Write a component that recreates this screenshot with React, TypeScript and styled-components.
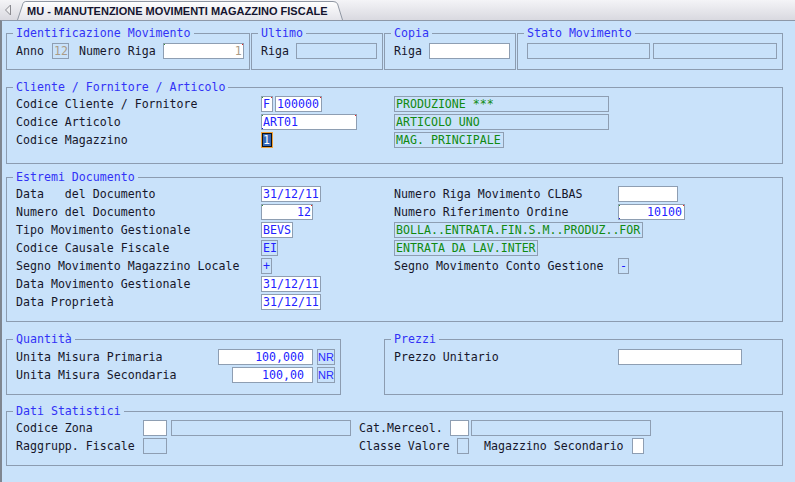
import React from "react";
import styled, { createGlobalStyle } from "styled-components";

const GlobalStyle = createGlobalStyle`
  html, body { margin: 0; padding: 0; }
  body {
    background: #c9e2fa;
    font-family: "DejaVu Sans Mono", "Liberation Mono", monospace;
    font-size: 11.6px;
    color: #16162a;
  }
`;

const Screen = styled.div`
  width: 795px;
  height: 482px;
  display: flex;
  flex-direction: column;
  overflow: hidden;
`;

const TabBar = styled.div`
  height: 20px;
  flex: none;
  display: flex;
  align-items: flex-end;
  background: linear-gradient(#f4f4f7, #d9d9e0);
`;

const BackArrow = styled.svg`
  width: 8px;
  height: 12px;
  margin: 0 0 4px 4px;
  flex: none;
`;

const Tab = styled.div`
  position: relative;
  width: 326px;
  height: 19px;
  margin-left: 5px;
  flex: none;
  display: flex;
  align-items: center;
  box-sizing: border-box;
  padding-left: 10px;
  font: bold 11px "Liberation Sans", Arial, sans-serif;
  color: #14142e;
  > svg {
    position: absolute;
    inset: 0;
  }
  > span {
    position: relative;
  }
`;

const Panel = styled.div`
  flex: 1;
  border-top: 1px solid #8d98a8;
  border-left: 2px solid #7f8690;
  padding: 6px 0 0 4px;
  display: flex;
  flex-direction: column;
`;

const GroupRow = styled.div<{ $mt?: number; $gap?: number }>`
  display: flex;
  gap: ${(p) => p.$gap ?? 1}px;
  margin-top: ${(p) => p.$mt ?? 0}px;
`;

const Group = styled.fieldset<{ $w: number; $pt?: number; $pb?: number; $pr?: number; $mt?: number }>`
  box-sizing: border-box;
  width: ${(p) => p.$w}px;
  min-width: 0;
  margin: ${(p) => p.$mt ?? 0}px 0 0;
  border: 1px solid #8c9cb0;
  padding: ${(p) => p.$pt ?? 1}px ${(p) => p.$pr ?? 6}px ${(p) => p.$pb ?? 10}px 9px;
`;

const Legend = styled.legend`
  padding: 0 3px;
  margin-left: -3px;
  line-height: 13px;
  color: #3232f6;
`;

const Columns = styled.div`
  display: flex;
`;

const Col = styled.div<{ $w?: number }>`
  display: flex;
  flex-direction: column;
  width: ${(p) => (p.$w ? `${p.$w}px` : "auto")};
  flex: ${(p) => (p.$w ? "none" : "1")};
`;

const Row = styled.div`
  height: 18px;
  display: flex;
  align-items: center;
`;

const Label = styled.span<{ $w?: number; $ml?: number; $grow?: boolean }>`
  flex: ${(p) => (p.$grow ? "1" : "none")};
  width: ${(p) => (p.$w ? `${p.$w}px` : "auto")};
  margin-left: ${(p) => p.$ml ?? 0}px;
  white-space: pre;
`;

type Tone = "blue" | "green" | "tan";

const toneColor: Record<Tone, string> = {
  blue: "#2222ff",
  green: "#108a10",
  tan: "#ab9c86",
};

const Field = styled.div<{
  $w: number;
  $edit?: boolean;
  $tone?: Tone;
  $right?: boolean;
  $ml?: number;
  $pr?: number;
}>`
  position: relative;
  box-sizing: border-box;
  flex: none;
  width: ${(p) => p.$w}px;
  height: 16px;
  margin-left: ${(p) => p.$ml ?? 0}px;
  border: 1px solid #8e9eb2;
  background: ${(p) => (p.$edit ? "#ffffff" : "transparent")};
  color: ${(p) => toneColor[p.$tone ?? "blue"]};
  line-height: 14px;
  padding: 0 ${(p) => p.$pr ?? 1}px 0 1px;
  text-align: ${(p) => (p.$right ? "right" : "left")};
  white-space: pre;
  overflow: hidden;
`;

const Mark = styled.i<{ $at: "g" | "r" | "b" }>`
  position: absolute;
  width: 2px;
  height: 2px;
  background: ${(p) => (p.$at === "g" ? "#2f8f3a" : p.$at === "r" ? "#e82020" : "#1414e0")};
  ${(p) =>
    p.$at === "g"
      ? "top: -1px; left: -1px;"
      : p.$at === "r"
      ? "top: -1px; right: -1px;"
      : "bottom: -1px; left: -1px;"}
`;

const Picked = styled.div`
  box-sizing: border-box;
  width: 12px;
  height: 16px;
  border: 1px solid #f0a23a;
  box-shadow: inset 0 0 0 1px #111;
  padding: 1px;
  line-height: 12px;
  > span {
    display: block;
    height: 12px;
    background: #3467b8;
    color: #fff;
  }
`;

const Unit = styled.div`
  box-sizing: border-box;
  width: 18px;
  height: 16px;
  margin-left: 4px;
  border: 1px solid #8e9eb2;
  font: 11px/14px "Liberation Sans", Arial, sans-serif;
  color: #2a2aff;
  text-align: center;
`;

const StatGrid = styled.div`
  display: grid;
  grid-template-columns: 127px 216px 91px 1fr;
  grid-auto-rows: 18px;
  align-items: center;
  > div {
    display: flex;
    align-items: center;
  }
`;

type BoxProps = React.ComponentProps<typeof Field> & { marks?: string };

const Box: React.FC<BoxProps> = ({ marks = "", children, ...rest }) => (
  <Field {...rest}>
    {children}
    {marks.split("").map((m) => (
      <Mark key={m} $at={m as "g" | "r" | "b"} />
    ))}
  </Field>
);

const App: React.FC = () => {
  return (
    <Screen>
      <GlobalStyle />
      <TabBar>
        <BackArrow viewBox="0 0 8 12">
          <polygon points="6.5,1 1.5,6 6.5,11" fill="#f0f0f2" stroke="#8a8a90" strokeWidth="1" />
        </BackArrow>
        <Tab>
          <svg viewBox="0 0 326 19" preserveAspectRatio="none" width="326" height="19">
            <defs>
              <linearGradient id="tabfill" x1="0" y1="0" x2="0" y2="1">
                <stop offset="0" stopColor="#ffffff" />
                <stop offset="1" stopColor="#e4e4ea" />
              </linearGradient>
            </defs>
            <path
              d="M0.5 19 L6 2.5 Q6.8 0.5 8.8 0.5 L316 0.5 Q319.6 0.5 320.6 3 L325.5 19"
              fill="url(#tabfill)"
              stroke="#8f96a2"
            />
          </svg>
          <span>MU - MANUTENZIONE MOVIMENTI MAGAZZINO FISCALE</span>
        </Tab>
      </TabBar>

      <Panel>
        <GroupRow>
          <Group $w={244} $pt={2} $pb={9}>
            <Legend>Identificazione Movimento</Legend>
            <Row>
              <Label>Anno</Label>
              <Box $w={17} $ml={8} $tone="tan" $right>12</Box>
              <Label $ml={10}>Numero Riga</Label>
              <Box $w={81} $ml={7} $edit $tone="tan" $right marks="gr">1</Box>
            </Row>
          </Group>
          <Group $w={132} $pt={2} $pb={9}>
            <Legend>Ultimo</Legend>
            <Row>
              <Label>Riga</Label>
              <Box $w={81} $ml={7} />
            </Row>
          </Group>
          <Group $w={132} $pt={2} $pb={9}>
            <Legend>Copia</Legend>
            <Row>
              <Label>Riga</Label>
              <Box $w={81} $ml={7} $edit />
            </Row>
          </Group>
          <Group $w={266} $pt={2} $pb={9}>
            <Legend>Stato Movimento</Legend>
            <Row>
              <Box $w={123} />
              <Box $w={124} $ml={3} />
            </Row>
          </Group>
        </GroupRow>

        <Group $w={777} $mt={11} $pt={1} $pb={14}>
          <Legend>Cliente / Fornitore / Articolo</Legend>
          <Columns>
            <Col $w={378}>
              <Row>
                <Label $w={245}>Codice Cliente / Fornitore</Label>
                <Box $w={12} $edit marks="gr">F</Box>
                <Box $w={47} $ml={2} $edit marks="r">100000</Box>
              </Row>
              <Row>
                <Label $w={245}>Codice Articolo</Label>
                <Box $w={96} $edit marks="grb">ART01</Box>
              </Row>
              <Row>
                <Label $w={245}>Codice Magazzino</Label>
                <Picked>
                  <span>1</span>
                </Picked>
              </Row>
            </Col>
            <Col>
              <Row>
                <Box $w={215} $tone="green">PRODUZIONE ***</Box>
              </Row>
              <Row>
                <Box $w={215} $tone="green">ARTICOLO UNO</Box>
              </Row>
              <Row>
                <Box $w={110} $tone="green">MAG. PRINCIPALE</Box>
              </Row>
            </Col>
          </Columns>
        </Group>

        <Group $w={777} $mt={7} $pt={1} $pb={10}>
          <Legend>Estremi Documento</Legend>
          <Columns>
            <Col $w={378}>
              <Row>
                <Label $w={245}>Data   del Documento</Label>
                <Box $w={60} $edit>31/12/11</Box>
              </Row>
              <Row>
                <Label $w={245}>Numero del Documento</Label>
                <Box $w={52} $edit $right marks="gr">12</Box>
              </Row>
              <Row>
                <Label $w={245}>Tipo Movimento Gestionale</Label>
                <Box $w={32} $edit>BEVS</Box>
              </Row>
              <Row>
                <Label $w={245}>Codice Causale Fiscale</Label>
                <Box $w={17}>EI</Box>
              </Row>
              <Row>
                <Label $w={245}>Segno Movimento Magazzino Locale</Label>
                <Box $w={11}>+</Box>
              </Row>
              <Row>
                <Label $w={245}>Data Movimento Gestionale</Label>
                <Box $w={60} $edit>31/12/11</Box>
              </Row>
              <Row>
                <Label $w={245}>Data Proprietà</Label>
                <Box $w={60} $edit>31/12/11</Box>
              </Row>
            </Col>
            <Col>
              <Row>
                <Label $w={224}>Numero Riga Movimento CLBAS</Label>
                <Box $w={60} $edit />
              </Row>
              <Row>
                <Label $w={224}>Numero Riferimento Ordine</Label>
                <Box $w={67} $edit $right $pr={2} marks="grb">10100</Box>
              </Row>
              <Row>
                <Box $w={249} $tone="green">BOLLA..ENTRATA.FIN.S.M..PRODUZ..FOR</Box>
              </Row>
              <Row>
                <Box $w={144} $tone="green">ENTRATA DA LAV.INTER</Box>
              </Row>
              <Row>
                <Label $w={224}>Segno Movimento Conto Gestione</Label>
                <Box $w={11}>-</Box>
              </Row>
            </Col>
          </Columns>
        </Group>

        <GroupRow $mt={11} $gap={43}>
          <Group $w={335} $pt={2} $pb={10} $pr={5}>
            <Legend>Quantità</Legend>
            <Row>
              <Label $grow>Unita Misura Primaria</Label>
              <Box $w={95} $edit $right $pr={8}>100,000</Box>
              <Unit>NR</Unit>
            </Row>
            <Row>
              <Label $grow>Unita Misura Secondaria</Label>
              <Box $w={81} $edit $right $pr={8}>100,00</Box>
              <Unit>NR</Unit>
            </Row>
          </Group>
          <Group $w={399} $pt={2} $pb={10}>
            <Legend>Prezzi</Legend>
            <Row>
              <Label $w={224}>Prezzo Unitario</Label>
              <Box $w={124} $edit />
            </Row>
          </Group>
        </GroupRow>

        <Group $w={777} $mt={10} $pt={1} $pb={10}>
          <Legend>Dati Statistici</Legend>
          <StatGrid>
            <Label>Codice Zona</Label>
            <div>
              <Box $w={24} $edit />
              <Box $w={180} $ml={4} />
            </div>
            <Label>Cat.Merceol.</Label>
            <div>
              <Box $w={19} $edit />
              <Box $w={180} $ml={2} />
            </div>
            <Label>Raggrupp. Fiscale</Label>
            <div>
              <Box $w={24} />
            </div>
            <Label>Classe Valore</Label>
            <div>
              <Box $w={12} $ml={7} />
              <Label $ml={15}>Magazzino Secondario</Label>
              <Box $w={12} $ml={8} $edit />
            </div>
          </StatGrid>
        </Group>
      </Panel>
    </Screen>
  );
};

export default App;
